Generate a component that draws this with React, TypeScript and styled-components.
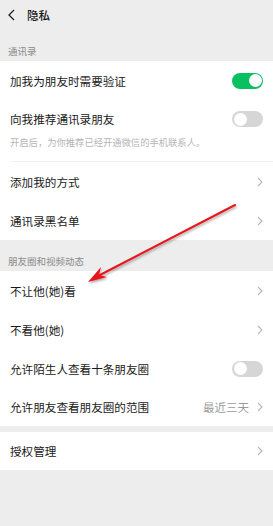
import React from 'react';
import styled, { createGlobalStyle } from 'styled-components';

const GlobalStyle = createGlobalStyle`
    html, body {
        margin: 0;
        padding: 0;
        background: #ededed;
        font-family: "Noto Sans CJK SC", "Noto Sans", sans-serif;
    }
`;

const Page = styled.div`
    position: relative;
    width: 273px;
    height: 526px;
    background: #ededed;
    overflow: hidden;
`;

const Header = styled.div`
    display: flex;
    align-items: center;
    height: 29px;
    padding-left: 7px;
    gap: 10px;
`;

const Title = styled.span`
    font-size: 11.5px;
    font-weight: 500;
    color: #1a1a1a;
`;

const SectionLabel = styled.div<{ $h: number }>`
    height: ${(p) => p.$h}px;
    padding: 0 8px 3px 8px;
    box-sizing: border-box;
    display: flex;
    align-items: flex-end;
    font-size: 9.5px;
    line-height: 14px;
    color: #8a8a8a;
`;

const Group = styled.div`
    background: #fff;
`;

const Gap = styled.div`
    height: 6px;
`;

const Row = styled.div<{ $h?: number }>`
    display: flex;
    align-items: center;
    justify-content: space-between;
    height: ${(p) => p.$h ?? 39}px;
    padding: 0 10px;
    box-sizing: border-box;
`;

const Label = styled.span`
    font-size: 11.6px;
    color: #1a1a1a;
`;

const Block = styled.div`
    height: 62px;
    box-sizing: border-box;
    padding: 8px 10px 0 10px;
    position: relative;
    &::after {
        content: '';
        position: absolute;
        left: 10px;
        right: 0;
        bottom: 0;
        height: 1px;
        background: #f0f0f0;
    }
`;

const BlockTop = styled.div`
    display: flex;
    align-items: center;
    justify-content: space-between;
    height: 22px;
`;

const SubText = styled.div`
    font-size: 9.3px;
    line-height: 14px;
    color: #b5b5b5;
    margin-top: 5px;
`;

const Right = styled.div`
    display: flex;
    align-items: center;
    gap: 8px;
`;

const Value = styled.span`
    font-size: 11.5px;
    color: #9a9a9a;
`;

const Toggle = styled.div<{ $on?: boolean }>`
    width: 31px;
    height: 16px;
    border-radius: 8px;
    background: ${(p) => (p.$on ? '#07c160' : '#d6d6d6')};
    display: flex;
    align-items: center;
    justify-content: ${(p) => (p.$on ? 'flex-end' : 'flex-start')};
    padding: 0 1.5px;
    box-sizing: border-box;
    &::before {
        content: '';
        width: 13px;
        height: 13px;
        border-radius: 50%;
        background: #fff;
    }
`;

const Arrow = styled.svg`
    position: absolute;
    left: 0;
    top: 0;
    pointer-events: none;
`;

function Chevron() {
    return (
        <svg width="6" height="10" viewBox="0 0 6 10">
            <path d="M1 1l4 4-4 4" fill="none" stroke="#b8b8b8" strokeWidth="1.1" />
        </svg>
    );
}

function LinkRow({ label, value, h }: { label: string; value?: string; h?: number }) {
    return (
        <Row $h={h}>
            <Label>{label}</Label>
            <Right>
                {value && <Value>{value}</Value>}
                <Chevron />
            </Right>
        </Row>
    );
}

export default function App() {
    return (
        <Page>
            <GlobalStyle />
            <Header>
                <svg width="10" height="12" viewBox="0 0 10 12">
                    <path d="M7 1L2 6l5 5" fill="none" stroke="#222" strokeWidth="1.3" />
                </svg>
                <Title>隐私</Title>
            </Header>
            <SectionLabel $h={32}>通讯录</SectionLabel>
            <Group>
                <Row>
                    <Label>加我为朋友时需要验证</Label>
                    <Toggle $on />
                </Row>
                <Block>
                    <BlockTop>
                        <Label>向我推荐通讯录朋友</Label>
                        <Toggle />
                    </BlockTop>
                    <SubText>开启后，为你推荐已经开通微信的手机联系人。</SubText>
                </Block>
                <LinkRow label="添加我的方式" />
                <LinkRow label="通讯录黑名单" />
            </Group>
            <SectionLabel $h={31}>朋友圈和视频动态</SectionLabel>
            <Group>
                <LinkRow label="不让他(她)看" />
                <LinkRow label="不看他(她)" />
                <Row>
                    <Label>允许陌生人查看十条朋友圈</Label>
                    <Toggle />
                </Row>
                <LinkRow label="允许朋友查看朋友圈的范围" value="最近三天" h={38} />
            </Group>
            <Gap />
            <Group>
                <LinkRow label="授权管理" h={38} />
            </Group>
            <Arrow width="273" height="526" viewBox="0 0 273 526">
                <defs>
                    <filter id="sh" x="-10%" y="-10%" width="120%" height="120%">
                        <feDropShadow dx="1" dy="1.5" stdDeviation="1" floodColor="#000" floodOpacity="0.35" />
                    </filter>
                </defs>
                <g filter="url(#sh)">
                    <line x1="235" y1="205" x2="98" y2="276" stroke="#e8141a" strokeWidth="2" strokeLinecap="round" />
                    <path d="M88 282 L101 267 L99 275 L107 277 Z" fill="#e8141a" />
                </g>
            </Arrow>
        </Page>
    );
}
